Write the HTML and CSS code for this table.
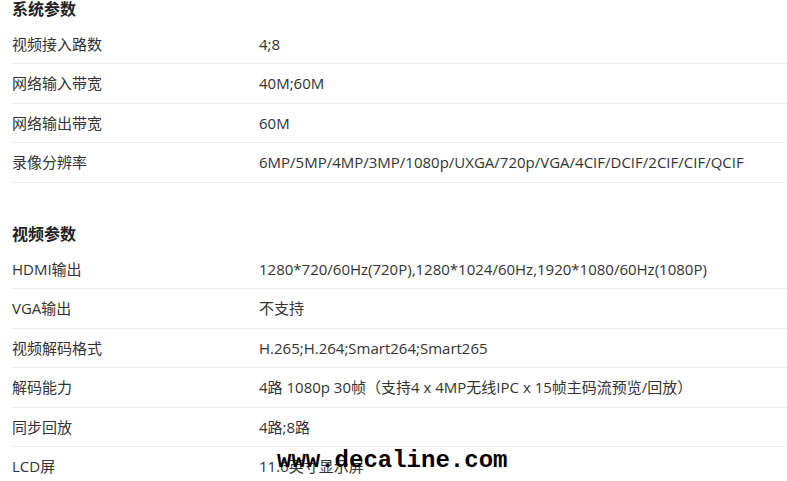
FILE: index.html
```html
<!DOCTYPE html>
<html lang="zh-CN">
<head>
  <meta charset="UTF-8">
  <meta name="viewport" content="width=device-width, initial-scale=1.0">
  <title>产品参数</title>
  <link rel="stylesheet" href="styles.css">
</head>
<body>
  <div class="spec-page">
    <section class="spec-section">
      <h2>系统参数</h2>
      <div class="spec-row"><div class="spec-label">视频接入路数</div><div class="spec-value">4;8</div></div>
      <div class="spec-row"><div class="spec-label">网络输入带宽</div><div class="spec-value">40M;60M</div></div>
      <div class="spec-row"><div class="spec-label">网络输出带宽</div><div class="spec-value">60M</div></div>
      <div class="spec-row"><div class="spec-label">录像分辨率</div><div class="spec-value">6MP/5MP/4MP/3MP/1080p/UXGA/720p/VGA/4CIF/DCIF/2CIF/CIF/QCIF</div></div>
    </section>

    <section class="spec-section">
      <h2>视频参数</h2>
      <div class="spec-row"><div class="spec-label">HDMI输出</div><div class="spec-value">1280*720/60Hz(720P),1280*1024/60Hz,1920*1080/60Hz(1080P)</div></div>
      <div class="spec-row"><div class="spec-label">VGA输出</div><div class="spec-value">不支持</div></div>
      <div class="spec-row"><div class="spec-label">视频解码格式</div><div class="spec-value">H.265;H.264;Smart264;Smart265</div></div>
      <div class="spec-row"><div class="spec-label">解码能力</div><div class="spec-value">4路 1080p 30帧（支持4 x 4MP无线IPC x 15帧主码流预览/回放）</div></div>
      <div class="spec-row"><div class="spec-label">同步回放</div><div class="spec-value">4路;8路</div></div>
      <div class="spec-row"><div class="spec-label">LCD屏</div><div class="spec-value">11.6英寸显示屏</div></div>
    </section>
  </div>

  <div class="watermark">www.decaline.com</div>
</body>
</html>
```

FILE: styles.css
```css
body {
  font-family: 'Open Sans', 'Noto Sans CJK SC', sans-serif;
  margin: 0;
  padding: 0;
  color: #333;
  background-color: white;
  font-size: 15px;
}
.spec-page {
  padding-left: 12px;
}
.spec-section {
  margin-bottom: 42.5px;
}
.spec-section h2 {
  margin: 0 0 6.5px 0;
  font-size: 16px;
  line-height: 18px;
  font-weight: bold;
  color: #222;
}
.spec-row {
  display: flex;
  align-items: center;
  padding: 9.25px 0;
  line-height: 20px;
  border-bottom: 1px solid #eee;
}
.spec-label {
  width: 247px;
  flex-shrink: 0;
}
.spec-value {
  flex: 1;
  white-space: nowrap;
}
.watermark {
  position: absolute;
  left: 277px;
  top: 447px;
  font-family: 'Liberation Mono', monospace;
  font-weight: bold;
  font-size: 24px;
  line-height: 28px;
  color: #000;
}
```
